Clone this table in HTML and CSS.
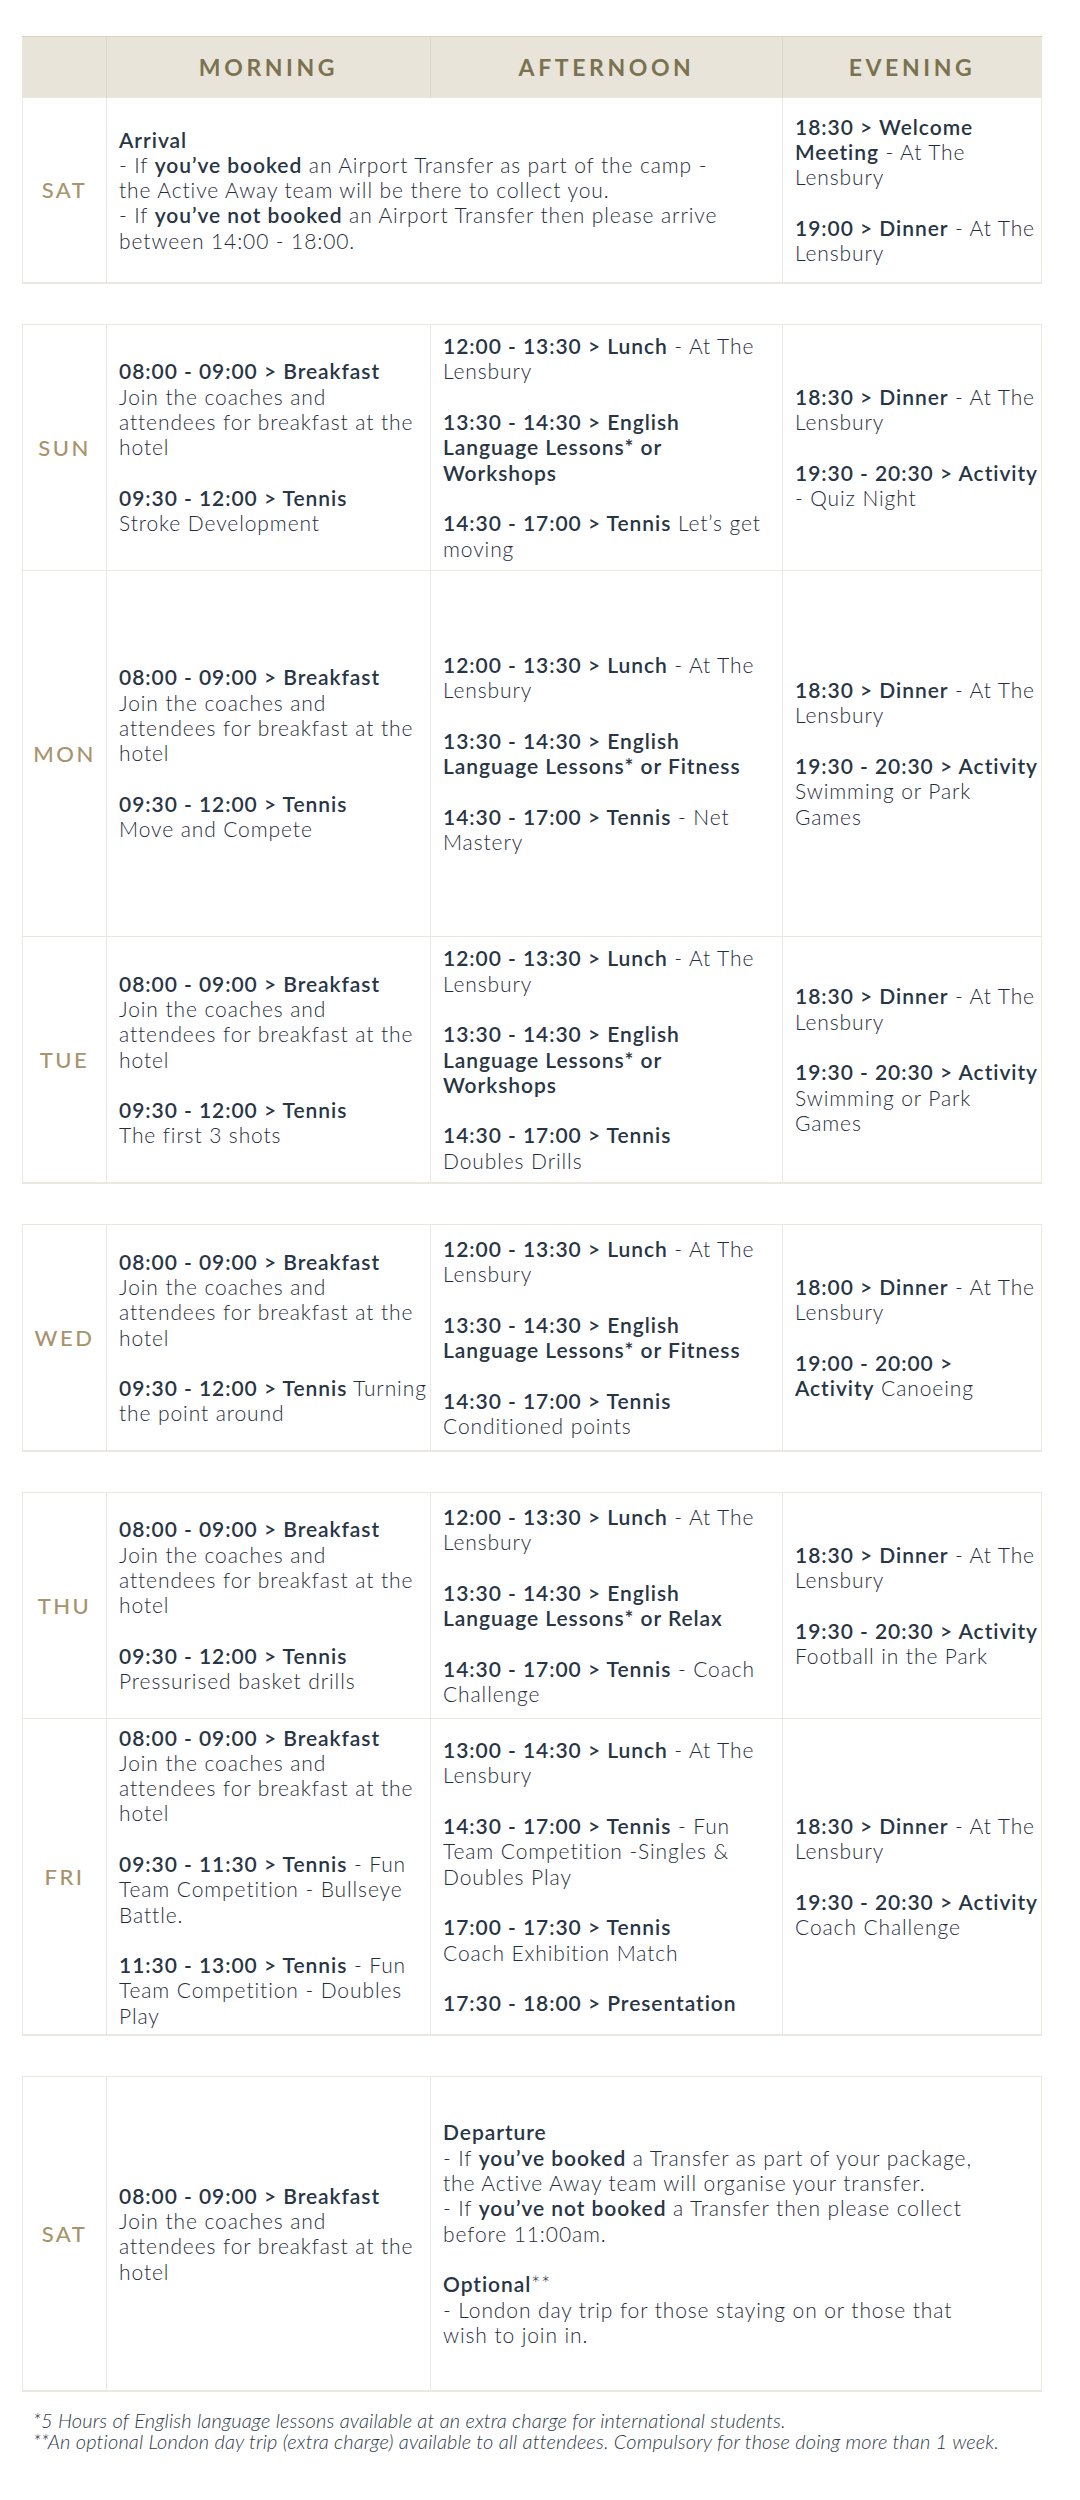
FILE: index.html
```html
<!DOCTYPE html>
<html lang="en">
<head>
<meta charset="utf-8">
<title>Camp Schedule</title>
<link rel="stylesheet" href="styles.css">
</head>
<body>
<main class="schedule">

<table class="week">
  <colgroup><col class="c-day"><col class="c-morning"><col class="c-afternoon"><col class="c-evening"></colgroup>
  <thead>
    <tr class="r-head">
      <th></th><th>MORNING</th><th>AFTERNOON</th><th>EVENING</th>
    </tr>
  </thead>
  <tbody>
    <tr class="r-sat1">
      <td class="day">SAT</td>
      <td colspan="2"><div class="c"><strong>Arrival</strong><br>- If <strong>you’ve booked</strong> an Airport Transfer as part of the camp -<br>the Active Away team will be there to collect you.<br>- If <strong>you’ve not booked</strong> an Airport Transfer then please arrive<br>between 14:00 - 18:00.</div></td>
      <td><div class="c"><strong>18:30 &gt; Welcome</strong><br><strong>Meeting</strong> - At The<br>Lensbury<br><br><strong>19:00 &gt; Dinner</strong> - At The<br>Lensbury</div></td>
    </tr>
  </tbody>
</table>

<table class="week">
  <colgroup><col class="c-day"><col class="c-morning"><col class="c-afternoon"><col class="c-evening"></colgroup>
  <tbody>
    <tr class="r-sun">
      <td class="day">SUN</td>
      <td><div class="c"><strong>08:00 - 09:00 &gt; Breakfast</strong><br>Join the coaches and<br>attendees for breakfast at the<br>hotel<br><br><strong>09:30 - 12:00 &gt; Tennis</strong><br>Stroke Development</div></td>
      <td><div class="c"><strong>12:00 - 13:30 &gt; Lunch</strong> - At The<br>Lensbury<br><br><strong>13:30 - 14:30 &gt; English</strong><br><strong>Language Lessons* or</strong><br><strong>Workshops</strong><br><br><strong>14:30 - 17:00 &gt; Tennis</strong> Let’s get<br>moving</div></td>
      <td><div class="c"><strong>18:30 &gt; Dinner</strong> - At The<br>Lensbury<br><br><strong>19:30 - 20:30 &gt; Activity</strong><br>- Quiz Night</div></td>
    </tr>
    <tr class="r-mon">
      <td class="day">MON</td>
      <td><div class="c"><strong>08:00 - 09:00 &gt; Breakfast</strong><br>Join the coaches and<br>attendees for breakfast at the<br>hotel<br><br><strong>09:30 - 12:00 &gt; Tennis</strong><br>Move and Compete</div></td>
      <td><div class="c"><strong>12:00 - 13:30 &gt; Lunch</strong> - At The<br>Lensbury<br><br><strong>13:30 - 14:30 &gt; English</strong><br><strong>Language Lessons* or Fitness</strong><br><br><strong>14:30 - 17:00 &gt; Tennis</strong> - Net<br>Mastery</div></td>
      <td><div class="c"><strong>18:30 &gt; Dinner</strong> - At The<br>Lensbury<br><br><strong>19:30 - 20:30 &gt; Activity</strong><br>Swimming or Park<br>Games</div></td>
    </tr>
    <tr class="r-tue">
      <td class="day">TUE</td>
      <td><div class="c"><strong>08:00 - 09:00 &gt; Breakfast</strong><br>Join the coaches and<br>attendees for breakfast at the<br>hotel<br><br><strong>09:30 - 12:00 &gt; Tennis</strong><br>The first 3 shots</div></td>
      <td><div class="c"><strong>12:00 - 13:30 &gt; Lunch</strong> - At The<br>Lensbury<br><br><strong>13:30 - 14:30 &gt; English</strong><br><strong>Language Lessons* or</strong><br><strong>Workshops</strong><br><br><strong>14:30 - 17:00 &gt; Tennis</strong><br>Doubles Drills</div></td>
      <td><div class="c"><strong>18:30 &gt; Dinner</strong> - At The<br>Lensbury<br><br><strong>19:30 - 20:30 &gt; Activity</strong><br>Swimming or Park<br>Games</div></td>
    </tr>
  </tbody>
</table>

<table class="week">
  <colgroup><col class="c-day"><col class="c-morning"><col class="c-afternoon"><col class="c-evening"></colgroup>
  <tbody>
    <tr class="r-wed">
      <td class="day">WED</td>
      <td><div class="c"><strong>08:00 - 09:00 &gt; Breakfast</strong><br>Join the coaches and<br>attendees for breakfast at the<br>hotel<br><br><strong>09:30 - 12:00 &gt; Tennis</strong> Turning<br>the point around</div></td>
      <td><div class="c"><strong>12:00 - 13:30 &gt; Lunch</strong> - At The<br>Lensbury<br><br><strong>13:30 - 14:30 &gt; English</strong><br><strong>Language Lessons* or Fitness</strong><br><br><strong>14:30 - 17:00 &gt; Tennis</strong><br>Conditioned points</div></td>
      <td><div class="c"><strong>18:00 &gt; Dinner</strong> - At The<br>Lensbury<br><br><strong>19:00 - 20:00 &gt;</strong><br><strong>Activity</strong> Canoeing</div></td>
    </tr>
  </tbody>
</table>

<table class="week">
  <colgroup><col class="c-day"><col class="c-morning"><col class="c-afternoon"><col class="c-evening"></colgroup>
  <tbody>
    <tr class="r-thu">
      <td class="day">THU</td>
      <td><div class="c"><strong>08:00 - 09:00 &gt; Breakfast</strong><br>Join the coaches and<br>attendees for breakfast at the<br>hotel<br><br><strong>09:30 - 12:00 &gt; Tennis</strong><br>Pressurised basket drills</div></td>
      <td><div class="c"><strong>12:00 - 13:30 &gt; Lunch</strong> - At The<br>Lensbury<br><br><strong>13:30 - 14:30 &gt; English</strong><br><strong>Language Lessons* or Relax</strong><br><br><strong>14:30 - 17:00 &gt; Tennis</strong> - Coach<br>Challenge</div></td>
      <td><div class="c"><strong>18:30 &gt; Dinner</strong> - At The<br>Lensbury<br><br><strong>19:30 - 20:30 &gt; Activity</strong><br>Football in the Park</div></td>
    </tr>
    <tr class="r-fri">
      <td class="day">FRI</td>
      <td><div class="c"><strong>08:00 - 09:00 &gt; Breakfast</strong><br>Join the coaches and<br>attendees for breakfast at the<br>hotel<br><br><strong>09:30 - 11:30 &gt; Tennis</strong> - Fun<br>Team Competition - Bullseye<br>Battle.<br><br><strong>11:30 - 13:00 &gt; Tennis</strong> - Fun<br>Team Competition - Doubles<br>Play</div></td>
      <td><div class="c"><strong>13:00 - 14:30 &gt; Lunch</strong> - At The<br>Lensbury<br><br><strong>14:30 - 17:00 &gt; Tennis</strong> - Fun<br>Team Competition -Singles &amp;<br>Doubles Play<br><br><strong>17:00 - 17:30 &gt; Tennis</strong><br>Coach Exhibition Match<br><br><strong>17:30 - 18:00 &gt; Presentation</strong></div></td>
      <td><div class="c"><strong>18:30 &gt; Dinner</strong> - At The<br>Lensbury<br><br><strong>19:30 - 20:30 &gt; Activity</strong><br>Coach Challenge</div></td>
    </tr>
  </tbody>
</table>

<table class="week">
  <colgroup><col class="c-day"><col class="c-morning"><col class="c-afternoon"><col class="c-evening"></colgroup>
  <tbody>
    <tr class="r-sat2">
      <td class="day">SAT</td>
      <td><div class="c"><strong>08:00 - 09:00 &gt; Breakfast</strong><br>Join the coaches and<br>attendees for breakfast at the<br>hotel</div></td>
      <td colspan="2"><div class="c"><strong>Departure</strong><br>- If <strong>you’ve booked</strong> a Transfer as part of your package,<br>the Active Away team will organise your transfer.<br>- If <strong>you’ve not booked</strong> a Transfer then please collect<br>before 11:00am.<br><br><strong>Optional</strong>**<br>- London day trip for those staying on or those that<br>wish to join in.</div></td>
    </tr>
  </tbody>
</table>

<footer class="notes">
  <p>*5 Hours of English language lessons available at an extra charge for international students.</p>
  <p>**An optional London day trip (extra charge) available to all attendees. Compulsory for those doing more than 1 week.</p>
</footer>

</main>
</body>
</html>
```
FILE: styles.css
```css
html, body {
  margin: 0;
  padding: 0;
  background: #ffffff;
}

body {
  font-family: Lato, "Open Sans", "Liberation Sans", sans-serif;
  color: #253344;
}

.schedule {
  width: 1019px;
  margin: 36px 0 0 22px;
}

.week {
  width: 1019px;
  table-layout: fixed;
  border-collapse: collapse;
  margin: 0 0 40px 0;
  border: 1px solid #ebe8e0;
  border-bottom: 2px solid #ebe8e2;
}

.c-day { width: 84px; }
.c-morning { width: 324px; }
.c-afternoon { width: 352px; }
.c-evening { width: 259px; }

.week th {
  background: #e8e4da;
  color: #7b7250;
  font-size: 23px;
  font-weight: 700;
  letter-spacing: 3.6px;
  text-align: center;
  padding: 0;
  border-left: 1px solid #ddd8ca;
  border-top: 1px solid #d9d2c0;
}

.week th:first-child { border-left: none; }

.week td {
  border: 1px solid #ebe8e0;
  padding: 6px 12px;
  vertical-align: middle;
  text-align: left;
}

.week td.day {
  text-align: center;
  padding: 0;
  color: #a8946c;
  font-size: 22px;
  font-weight: 500;
  letter-spacing: 2.5px;
}

.c {
  font-size: 21px;
  line-height: 25.3px;
  font-weight: 300;
  letter-spacing: 0.9px;
  white-space: nowrap;
  color: #1f2d3d;
}

.c strong {
  font-weight: 600;
  letter-spacing: 0.95px;
  color: #283545;
}

.r-head { height: 61px; }
.r-sat1 { height: 185px; }
.r-sun { height: 246px; }
.r-mon { height: 366px; }
.r-tue { height: 247px; }
.r-wed { height: 226px; }
.r-thu { height: 226px; }
.r-fri { height: 317px; }
.r-sat2 { height: 314px; }

.notes {
  margin: -22px 0 0 0;
  padding-left: 11px;
  color: #2c3949;
  font-size: 20px;
  font-style: italic;
  font-weight: 300;
  letter-spacing: 0.15px;
  line-height: 21.7px;
}

.notes p {
  margin: 0;
}
```
